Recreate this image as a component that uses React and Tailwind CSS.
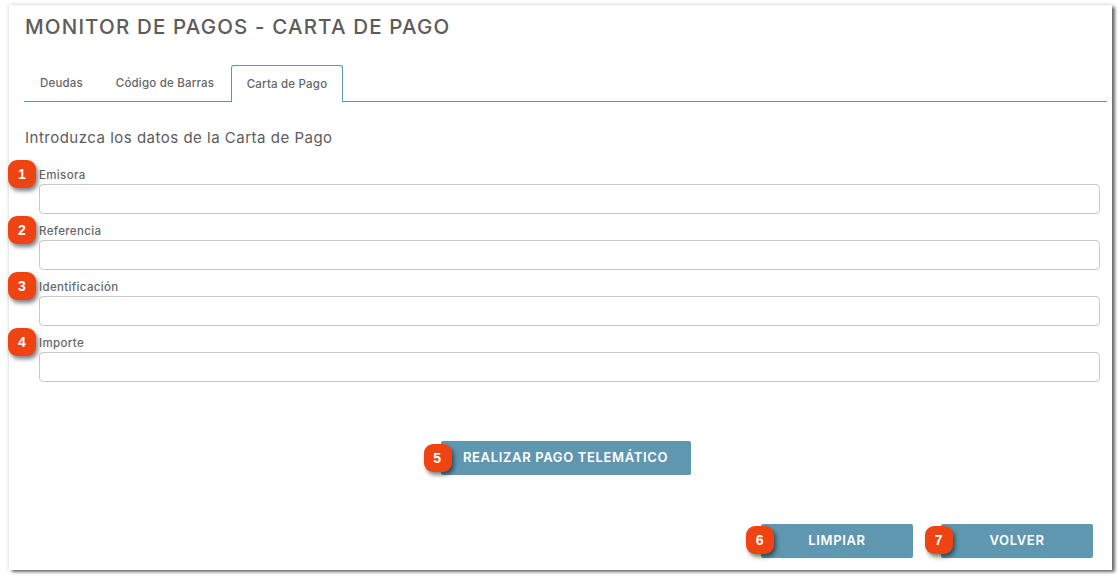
import React from 'react';

const campos = ['Emisora', 'Referencia', 'Identificación', 'Importe'];

// Marcador numerado naranja que se superpone al contenido
function Badge({ n, className }) {
    return (
        <span className={`absolute flex h-7 w-7 items-center justify-center rounded-[9px] bg-[#ef4412] text-[14px] font-bold text-white shadow-[2px_3px_4px_rgba(0,0,0,0.5)] [font-family:'Liberation_Sans',sans-serif] ${className}`}>
            {n}
        </span>
    );
}

function Boton({ n, children, className, badgeClass }) {
    return (
        <button className={`relative h-[34px] rounded-[2px] bg-[#5f97b1] text-[13px] font-semibold tracking-[0.65px] text-white ${className}`}>
            <Badge n={n} className={badgeClass} />
            {children}
        </button>
    );
}

export default function App() {
    return (
        <div className="h-[579px] w-[1120px] overflow-hidden bg-white pl-[9px] pr-2 pt-[5px] [font-family:Inter,sans-serif]">
            <div className="flex h-[565px] w-[1103px] flex-col bg-white pl-[15px] pr-[5px] shadow-[3px_2px_3px_rgba(0,0,0,0.55),0_0_4px_rgba(0,0,0,0.18)]">
                <h1 className="mt-[10px] h-[24px] pl-[1px] text-[20.5px] leading-[24px] font-medium tracking-[1.15px] text-[#5c5c5c]">MONITOR DE PAGOS - CARTA DE PAGO</h1>

                <div className="mt-[26px] flex h-[37px] border-b border-[#5f97a8] text-[11.5px] font-medium tracking-[0.2px] text-[#666]">
                    <div className="flex w-[75px] items-center justify-center pt-[1px]">Deudas</div>
                    <div className="flex w-[132px] items-center justify-center pt-[1px]">Código de Barras</div>
                    <div className="-mb-px flex w-[112px] items-center justify-center rounded-t-[3px] border border-b-0 border-[#5f97a8] bg-white pt-[1px]">Carta de Pago</div>
                </div>

                <h2 className="mt-[26px] h-[20px] pl-[1px] text-[15px] leading-[20px] font-normal tracking-[0.5px] text-[#5c5c5c]">Introduzca los datos de la Carta de Pago</h2>

                <div className="mt-[10px] flex flex-col pl-[15px] pr-[7px]">
                    {campos.map((campo, i) => (
                        <div key={campo} className="relative h-[56px] pt-[7px]">
                            <Badge n={i + 1} className="-left-[31px] top-[2px]" />
                            <label className="block h-[19px] pt-[3px] text-[11.5px] leading-[14px] font-medium tracking-[0.35px] text-[#666]">{campo}</label>
                            <input className="block h-[30px] w-full rounded-[4px] border border-[#c9c9c9] bg-white outline-none" />
                        </div>
                    ))}
                </div>

                <div className="mt-[59px] flex justify-center pr-[8px]">
                    <Boton n={5} className="ml-[8px] w-[250px]" badgeClass="-left-[17px] top-[3px]">REALIZAR PAGO TELEMÁTICO</Boton>
                </div>

                <div className="mt-[49px] flex justify-end gap-[28px] pr-[14px]">
                    <Boton n={6} className="w-[152px]" badgeClass="-left-[15px] top-[2px]">LIMPIAR</Boton>
                    <Boton n={7} className="w-[152px]" badgeClass="-left-[16px] top-[2px]">VOLVER</Boton>
                </div>
            </div>
        </div>
    );
}
